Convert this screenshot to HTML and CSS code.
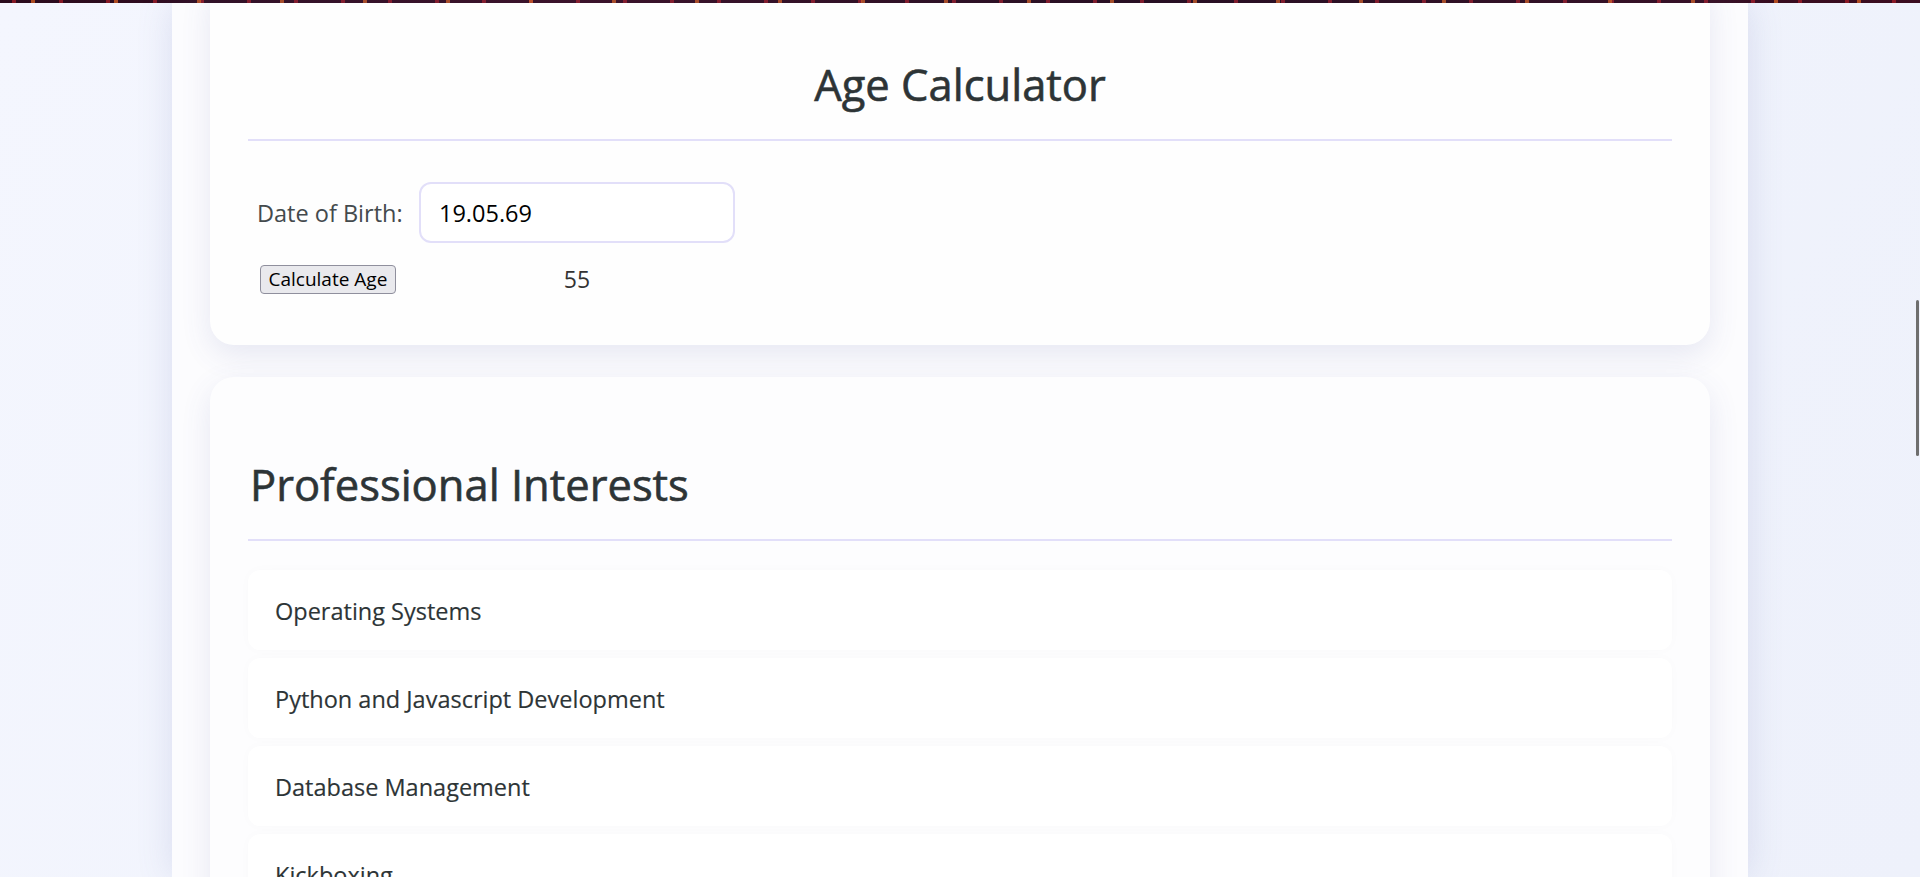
FILE: index.html
```html
<!DOCTYPE html>
<html lang="en">
<head>
<meta charset="utf-8">
<title>Age Calculator</title>
<link rel="stylesheet" href="styles.css">
</head>
<body>
<div class="hero-edge"></div>
<main class="page">
  <section class="card card-age">
    <h2 class="card-title card-title-center">Age Calculator</h2>
    <div class="age-form">
      <label class="dob-label" for="dob">Date of Birth:</label>
      <input class="dob-input" id="dob" type="text" value="19.05.69">
      <button class="calc-btn" type="button">Calculate Age</button>
      <span class="age-result">55</span>
    </div>
  </section>
  <section class="card card-interests">
    <h2 class="card-title card-title-left">Professional Interests</h2>
    <ul class="interest-list">
      <li class="interest">Operating Systems</li>
      <li class="interest">Python and Javascript Development</li>
      <li class="interest">Database Management</li>
      <li class="interest">Kickboxing</li>
    </ul>
  </section>
</main>
<div class="scroll-thumb"></div>
</body>
</html>
```
FILE: styles.css
```css
html, body {
  margin: 0;
  height: 100%;
  overflow: hidden;
}

body {
  background: linear-gradient(120deg, #f4f6fe 0%, #f0f3fc 60%, #eef1fb 100%);
  font-family: "Open Sans", "Noto Sans", sans-serif;
  color: #2d3436;
}

.hero-edge {
  height: 3px;
  background:
    repeating-linear-gradient(90deg, rgba(0,0,0,0) 0 31px, rgba(214,96,34,0.75) 31px 35px, rgba(0,0,0,0) 35px 83px),
    repeating-linear-gradient(90deg, rgba(0,0,0,0) 0 12px, rgba(170,30,40,0.7) 12px 16px, rgba(0,0,0,0) 16px 47px),
    linear-gradient(90deg, #2a0b1d, #3a0d22 30%, #240919 60%, #3b0c20);
}

.page {
  box-sizing: border-box;
  width: 1576px;
  height: calc(100% - 3px);
  margin: 0 auto;
  padding: 0 38px;
  background: #fcfcfe;
  box-shadow: 0 0 34px rgba(88, 100, 170, 0.16);
  overflow: hidden;
}

.card {
  background: #fefefe;
  border-radius: 24px;
  padding: 38px;
  box-shadow: 0 10px 30px rgba(70, 80, 160, 0.12);
}

.card-age {
  margin-top: -26px;
  padding-bottom: 51px;
}

.card-interests {
  margin-top: 32px;
  background: #fdfdfe;
}

.card-title {
  margin: 46px 0 0;
  padding-bottom: 30px;
  border-bottom: 2px solid #e2dff9;
  font-size: 43.5px;
  line-height: 48px;
  font-weight: 400;
  -webkit-text-stroke: 0.6px #2d3436;
  color: #2d3436;
}

.card-title-center {
  text-align: center;
}

.card-title-left {
  padding-left: 2px;
}

.age-form {
  display: grid;
  grid-template-columns: 164px 316px;
  align-items: center;
  row-gap: 22px;
  margin-top: 41px;
  padding-left: 7px;
}

.dob-label {
  padding-left: 2px;
  font-size: 23.5px;
  color: #444a4d;
}

.dob-input {
  box-sizing: border-box;
  width: 316px;
  height: 61px;
  padding: 0 18px;
  border: 2px solid #e2dff9;
  border-radius: 12px;
  background: #fff;
  font-family: inherit;
  font-size: 23.5px;
  color: #000;
  outline: none;
}

.calc-btn {
  justify-self: start;
  box-sizing: border-box;
  height: 29px;
  margin-left: 5px;
  padding: 0 7.5px;
  border: 1px solid #8f8f9d;
  border-radius: 4px;
  background: #e9e9ed;
  font-family: inherit;
  font-size: 19px;
  line-height: 1;
  color: #000;
}

.age-result {
  justify-self: center;
  font-size: 23px;
  line-height: 29px;
  color: #333;
}

.interest-list {
  list-style: none;
  margin: 29px 0 0;
  padding: 0;
  display: flex;
  flex-direction: column;
  gap: 8px;
}

.interest {
  padding: 25px 27px 23px;
  border-radius: 12px;
  background: #fff;
  box-shadow: 0 0 12px rgba(60, 60, 120, 0.02);
  font-size: 23.5px;
  line-height: 32px;
  -webkit-text-stroke: 0.15px #2d3436;
  color: #2d3436;
}

.scroll-thumb {
  position: fixed;
  top: 300px;
  right: 1px;
  width: 3px;
  height: 156px;
  border-radius: 2px;
  background: #6e6e6e;
}
```
